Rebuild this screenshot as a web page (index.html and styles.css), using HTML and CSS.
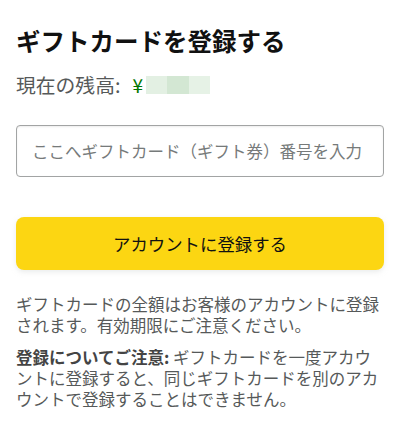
FILE: index.html
```html
<!DOCTYPE html>
<html lang="ja">
<head>
<meta charset="utf-8">
<link rel="stylesheet" href="styles.css">
</head>
<body>
<main class="page">
  <h1 class="title">ギフトカードを登録する</h1>
  <div class="balance">現在の残高: <span class="yen">¥</span><span class="masked"><span class="m1"></span><span class="m2"></span><span class="m3"></span></span></div>
  <input class="code" type="text" placeholder="ここへギフトカード（ギフト券）番号を入力">
  <button class="submit" type="button">アカウントに登録する</button>
  <p class="note">ギフトカードの全額はお客様のアカウントに登録されます。有効期限にご注意ください。</p>
  <p class="note"><strong class="em">登録についてご注意:</strong> ギフトカードを一度アカウントに登録すると、同じギフトカードを別のアカウントで登録することはできません。</p>
</main>
</body>
</html>
```

FILE: styles.css
```css
* { box-sizing: border-box; }
html, body { margin: 0; padding: 0; background: #fff; }
body {
  font-family: "Noto Sans CJK JP", "Noto Sans", sans-serif;
  color: #0f1111;
}
.page {
  display: flex;
  flex-direction: column;
  padding: 25px 16px 0 16px;
}
.title {
  margin: 0;
  font-size: 24.5px;
  line-height: 32px;
  font-weight: 700;
  color: #111;
}
.balance {
  display: flex;
  align-items: center;
  margin-top: 15px;
  font-size: 19.8px;
  line-height: 26px;
  color: #565959;
}
.yen {
  color: #007600;
  margin-left: 12px;
  margin-right: 3px;
  font-size: 19px;
}
.masked {
  display: flex;
  height: 18px;
}
.masked span { width: 21.3px; height: 18px; }
.m1 { background: #e3f0e3; }
.m2 { background: #d3e7d3; }
.m3 { background: #e6f2e6; }
.code {
  margin-top: 27px;
  height: 52px;
  width: 100%;
  border: 1px solid #a2a4a4;
  border-radius: 4px;
  padding: 0 15px;
  font-family: inherit;
  font-size: 16.5px;
  color: #111;
  outline: none;
  box-shadow: 0 1px 2px rgba(15,17,17,.08) inset;
}
.code::placeholder { color: #767a7a; }
.submit {
  margin-top: 40px;
  height: 53px;
  width: 100%;
  border: none;
  border-radius: 8px;
  background: #fcd612;
  font-family: inherit;
  font-size: 17.4px;
  color: #111;
  box-shadow: 0 2px 5px rgba(213,217,217,.5);
}
.note {
  margin: 0;
  font-size: 16.5px;
  line-height: 20.7px;
  color: #565959;
}
.note:first-of-type { margin-top: 24px; }
.note + .note { margin-top: 12px; }
.em { display: inline-block; font-weight: 700; color: #444; }
```
